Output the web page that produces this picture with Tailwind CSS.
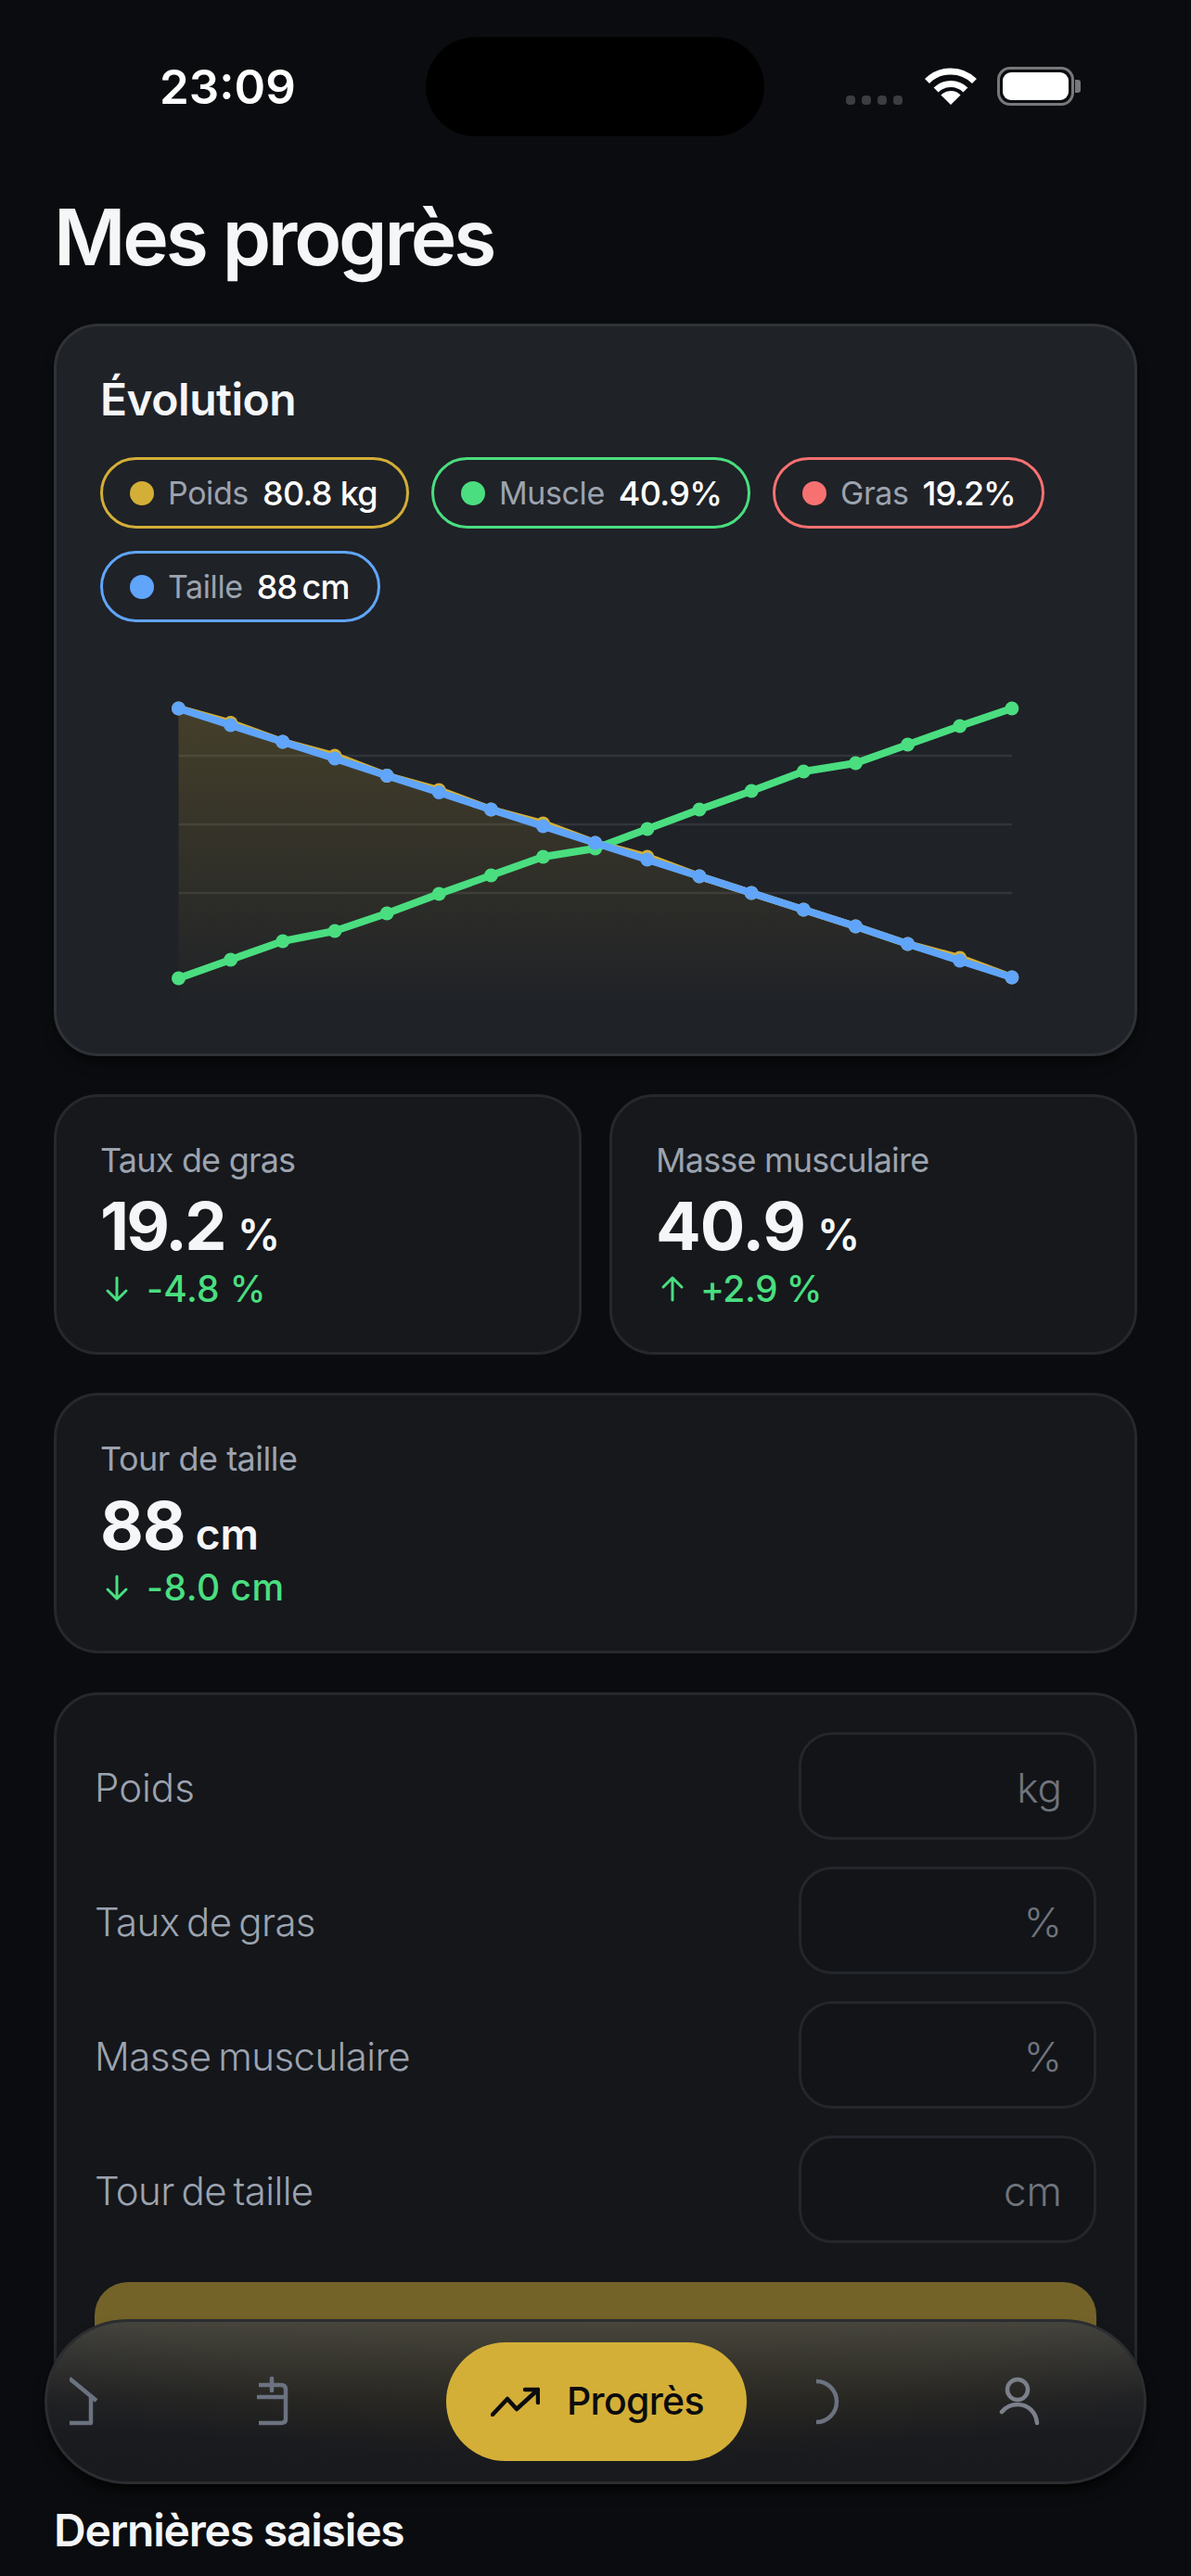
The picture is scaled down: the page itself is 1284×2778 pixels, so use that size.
<!DOCTYPE html>
<html lang="fr">
  <head>
    <meta charset="UTF-8" />
    <meta name="viewport" content="width=device-width, initial-scale=1.0" />
    <title>Mes progrès</title>
    <script src="https://cdn.jsdelivr.net/npm/@tailwindcss/browser@4"></script>
  </head>
  <body class="bg-[#0b0c0f] font-[Inter,sans-serif] text-[#f5f6f8]">
    <div class="relative w-[1284px] h-[2778px] overflow-hidden">
      <!-- status bar -->
      <div class="flex items-start pt-[40px] pl-[172px] h-[147px]">
        <div class="w-[287px] pt-[29px] text-[51px] leading-[50px] font-semibold text-white">23:09</div>
        <div class="w-[365px] h-[107px] rounded-full bg-black"></div>
        <div class="flex items-start ml-[88px] pt-[32px]">
          <div class="flex gap-[7px] mt-[31px]">
            <span class="w-[10px] h-[10px] rounded-[4px] bg-[#3c3d40]"></span>
            <span class="w-[10px] h-[10px] rounded-[4px] bg-[#3c3d40]"></span>
            <span class="w-[10px] h-[10px] rounded-[4px] bg-[#3c3d40]"></span>
            <span class="w-[10px] h-[10px] rounded-[4px] bg-[#3c3d40]"></span>
          </div>
          <svg class="ml-[24px] mt-[1px]" width="56" height="40" viewBox="0 0 56 40" fill="none" stroke="#fff" stroke-width="7">
            <path d="M2.5 14.5A36 36 0 0 1 53.5 14.5" />
            <path d="M12.1 24.1A22.5 22.5 0 0 1 43.9 24.1" />
            <path d="M28 40L17.4 29.4A15 15 0 0 1 38.6 29.4Z" fill="#fff" stroke="none" />
          </svg>
          <div class="flex items-center ml-[22px]">
            <div class="w-[83px] h-[42px] rounded-[14px] border-[3px] border-[#77787a] p-[3px]">
              <div class="w-full h-full rounded-[9px] bg-white"></div>
            </div>
            <div class="w-[6px] h-[14px] rounded-r-[3px] bg-[#77787a] ml-[1px]"></div>
          </div>
        </div>
      </div>

      <div class="px-[58px]">
        <h1 class="mt-[59px] text-[84px] leading-[100px] font-semibold tracking-[-3.2px]">Mes progrès</h1>

        <!-- chart card -->
        <section class="mt-[43px] h-[790px] rounded-[48px] border-[3px] border-[#2f3237] bg-[#1f2227] px-[47px] pt-[50px] shadow-lg shadow-black/40">
          <h2 class="text-[48px] leading-[58px] font-semibold tracking-[-0.5px]">Évolution</h2>
          <div class="flex flex-wrap gap-[24px] mt-[33px]">
            <div class="flex items-center h-[77px] w-[333px] rounded-full border-[3px] border-[#d4af37] pl-[29px]">
              <span class="w-[26px] h-[26px] rounded-full bg-[#d4af37]"></span>
              <span class="ml-[15px] text-[34px] text-[#9ca3af] tracking-[-0.4px]">Poids</span>
              <span class="ml-[15px] text-[36px] font-medium text-white tracking-[-0.7px]">80.8 kg</span>
            </div>
            <div class="flex items-center h-[77px] w-[344px] rounded-full border-[3px] border-[#4ade80] pl-[29px]">
              <span class="w-[26px] h-[26px] rounded-full bg-[#4ade80]"></span>
              <span class="ml-[15px] text-[34px] text-[#9ca3af] tracking-[-0.4px]">Muscle</span>
              <span class="ml-[15px] text-[36px] font-medium text-white tracking-[-0.7px]">40.9%</span>
            </div>
            <div class="flex items-center h-[77px] w-[293px] rounded-full border-[3px] border-[#f87171] pl-[29px]">
              <span class="w-[26px] h-[26px] rounded-full bg-[#f87171]"></span>
              <span class="ml-[15px] text-[34px] text-[#9ca3af] tracking-[-0.4px]">Gras</span>
              <span class="ml-[15px] text-[36px] font-medium text-white tracking-[-1.1px]">19.2%</span>
            </div>
            <div class="flex items-center h-[77px] w-[302px] rounded-full border-[3px] border-[#60a5fa] pl-[29px]">
              <span class="w-[26px] h-[26px] rounded-full bg-[#60a5fa]"></span>
              <span class="ml-[15px] text-[34px] text-[#9ca3af] tracking-[-0.4px]">Taille</span>
              <span class="ml-[15px] text-[36px] font-medium text-white tracking-[-1px] [word-spacing:-3px]">88 cm</span>
            </div>
          </div>
          <svg id="chart" class="block mt-[29px]" width="1067" height="400" viewBox="108 700 1067 400"></svg>
        </section>

        <!-- stats -->
        <div class="grid grid-cols-2 gap-[30px] mt-[41px]">
          <div class="h-[281px] rounded-[48px] border-[3px] border-[#26282c] bg-[#16181c] px-[47px] pt-[46px]">
            <div class="text-[36px] leading-[44px] text-[#9ca3af] tracking-[-0.8px]">Taux de gras</div>
            <div class="flex items-baseline mt-[9px] leading-[80px]">
              <span class="text-[72px] font-bold tracking-[-2.8px]">19.2</span>
              <span class="ml-[14px] text-[46px] font-semibold">%</span>
            </div>
            <div class="flex items-center mt-[-5px]">
              <svg width="36" height="36" viewBox="0 0 36 36" fill="none" stroke="#4ade80" stroke-width="3" stroke-linecap="round" stroke-linejoin="round"><path d="M18 6V30M8 20L18 30L28 20" /></svg>
              <span class="ml-[14px] text-[39px] leading-[48px] font-medium text-[#4ade80] tracking-[0.3px]">-4.8 %</span>
            </div>
          </div>
          <div class="h-[281px] rounded-[48px] border-[3px] border-[#26282c] bg-[#16181c] px-[47px] pt-[46px]">
            <div class="text-[36px] leading-[44px] text-[#9ca3af] tracking-[-0.8px]">Masse musculaire</div>
            <div class="flex items-baseline mt-[9px] leading-[80px]">
              <span class="text-[72px] font-bold tracking-[-1px]">40.9</span>
              <span class="ml-[13px] text-[46px] font-semibold">%</span>
            </div>
            <div class="flex items-center mt-[-5px]">
              <svg width="36" height="36" viewBox="0 0 36 36" fill="none" stroke="#4ade80" stroke-width="3" stroke-linecap="round" stroke-linejoin="round"><path d="M18 30V6M8 16L18 6L28 16" /></svg>
              <span class="ml-[12px] text-[39px] leading-[48px] font-medium text-[#4ade80] tracking-[-0.5px]">+2.9 %</span>
            </div>
          </div>
        </div>
        <div class="mt-[41px] h-[281px] rounded-[48px] border-[3px] border-[#26282c] bg-[#16181c] px-[47px] pt-[46px]">
          <div class="text-[36px] leading-[44px] text-[#9ca3af] tracking-[-0.5px]">Tour de taille</div>
          <div class="flex items-baseline mt-[10px] leading-[80px]">
            <span class="text-[72px] font-bold tracking-[-1px]">88</span>
            <span class="ml-[11px] text-[46px] font-semibold">cm</span>
          </div>
          <div class="flex items-center mt-[-6px]">
            <svg width="36" height="36" viewBox="0 0 36 36" fill="none" stroke="#4ade80" stroke-width="3" stroke-linecap="round" stroke-linejoin="round"><path d="M18 6V30M8 20L18 30L28 20" /></svg>
            <span class="ml-[14px] text-[39px] leading-[48px] font-medium text-[#4ade80] tracking-[0.5px]">-8.0 cm</span>
          </div>
        </div>

        <!-- form -->
        <section class="mt-[42px] h-[800px] rounded-[48px] border-[3px] border-[#26282c] bg-[#14161a] px-[41px] pt-[40px]">
          <div class="flex flex-col gap-[29px]">
            <div class="flex items-center justify-between h-[116px]">
              <span class="pt-[3px] text-[42px] font-light text-[#9ca3af]">Poids</span>
              <div class="flex items-center justify-end w-[321px] h-[116px] rounded-[36px] border-[3px] border-[#23262b] bg-[#121418] pr-[34px] pt-[3px] text-[44px] font-light text-[#70747c]">kg</div>
            </div>
            <div class="flex items-center justify-between h-[116px]">
              <span class="pt-[3px] text-[42px] font-light text-[#9ca3af] tracking-[-0.6px] [word-spacing:-3.5px]">Taux de gras</span>
              <div class="flex items-center justify-end w-[321px] h-[116px] rounded-[36px] border-[3px] border-[#23262b] bg-[#121418] pr-[34px] pt-[3px] text-[44px] font-light text-[#70747c]">%</div>
            </div>
            <div class="flex items-center justify-between h-[116px]">
              <span class="pt-[3px] text-[42px] font-light text-[#9ca3af] tracking-[-0.6px] [word-spacing:-3.5px]">Masse musculaire</span>
              <div class="flex items-center justify-end w-[321px] h-[116px] rounded-[36px] border-[3px] border-[#23262b] bg-[#121418] pr-[34px] pt-[3px] text-[44px] font-light text-[#70747c]">%</div>
            </div>
            <div class="flex items-center justify-between h-[116px]">
              <span class="pt-[3px] text-[42px] font-light text-[#9ca3af] tracking-[-0.6px] [word-spacing:-3.5px]">Tour de taille</span>
              <div class="flex items-center justify-end w-[321px] h-[116px] rounded-[36px] border-[3px] border-[#23262b] bg-[#121418] pr-[34px] pt-[3px] text-[44px] font-light text-[#70747c]">cm</div>
            </div>
          </div>
          <div class="mt-[42px] h-[130px] rounded-[36px] bg-[#d4af37]/50"></div>
        </section>

        <h2 class="mt-[75px] text-[48px] leading-[58px] font-semibold tracking-[-1.2px]">Dernières saisies</h2>
      </div>

      <!-- tab bar floats over the page -->
      <nav class="absolute left-[48px] top-[2501px] flex items-center w-[1188px] h-[178px] rounded-full border-[3px] border-[#2b2d30] bg-[radial-gradient(ellipse_760px_150px_at_50%_0%,#d4a80012_0%,#d4a8000d_60%,#d4a80000_100%),linear-gradient(180deg,#3e3f40_0%,#2d2e30_25%,#202124_48%,#1a1b1f_72%,#191a1e_100%)] shadow-lg shadow-black/60">
        <svg class="ml-[24px]" width="32" height="54" viewBox="0 0 32 54" fill="none" stroke="#6b7280" stroke-width="4.5" stroke-linejoin="round">
          <path d="M0 2L29 26M23 22V50H0" />
        </svg>
        <svg class="ml-[169px]" width="36" height="54" viewBox="0 0 36 54" fill="none" stroke="#6b7280" stroke-width="4.5" stroke-linejoin="round" stroke-linecap="round">
          <path d="M3 9H27Q32 9 32 14V46Q32 50 27 50H3" stroke-linecap="butt" />
          <path d="M1 22H32" stroke-linecap="butt" />
          <path d="M17 2V15" />
        </svg>
        <div class="flex items-center ml-[169px] w-[324px] h-[128px] rounded-full bg-[#d4af37] pl-[48px] text-[#0b0c0e]">
          <svg width="53" height="32" viewBox="0 0 53 32" fill="none" stroke="#0b0c0e" stroke-width="4.5" stroke-linecap="round" stroke-linejoin="round">
            <path d="M2 30L18 13L28 24L51 3M37 3H51V17" />
          </svg>
          <span class="ml-[29px] text-[41px] font-medium tracking-[-0.7px]">Progrès</span>
        </div>
        <svg class="ml-[73px]" width="32" height="50" viewBox="0 0 32 50" fill="none" stroke="#6b7280" stroke-width="4.5">
          <path d="M2 3A22 22 0 0 1 2 47" />
        </svg>
        <svg class="ml-[167px]" width="46" height="54" viewBox="0 0 46 54" fill="none" stroke="#7b808a" stroke-width="4.5" stroke-linecap="round">
          <circle cx="20" cy="14" r="11" />
          <path d="M3 38C8 32 14 30 20 30C31 30 40 38 41 50" />
        </svg>
      </nav>
    </div>

    <script>
      const yellow = [764, 779.5, 800, 815, 836.5, 852, 873, 888, 909, 924, 945, 963, 981, 999, 1018, 1033, 1054];
      const green = [1055, 1035, 1015, 1004, 985, 964, 944, 924, 915, 894, 873, 853, 832, 823, 803, 783, 764];
      const blue = [764, 782, 800, 818, 836.5, 854.5, 873, 891, 909, 927, 945, 963, 981, 999, 1018, 1036, 1054];
      const xAt = (i) => 192.5 + i * 56.15;

      function series(values, color) {
        const pts = values.map((y, i) => xAt(i) + "," + y).join(" ");
        let out = '<polyline points="' + pts + '" fill="none" stroke="' + color + '" stroke-width="8" stroke-linejoin="round" />';
        values.forEach((y, i) => {
          out += '<circle cx="' + xAt(i) + '" cy="' + y + '" r="7.5" fill="' + color + '" />';
        });
        return out;
      }

      const yellowPts = yellow.map((y, i) => xAt(i) + "," + y).join(" ");
      let svg =
        '<defs><linearGradient id="area" gradientUnits="userSpaceOnUse" x1="0" y1="764" x2="0" y2="1085">' +
        '<stop offset="0" stop-color="#d4af37" stop-opacity="0.21" /><stop offset="1" stop-color="#d4af37" stop-opacity="0" />' +
        "</linearGradient></defs>";
      [815, 889, 963].forEach((y) => {
        svg += '<line x1="192.5" x2="1091" y1="' + y + '" y2="' + y + '" stroke="#31343a" stroke-width="2.5" />';
      });
      svg += '<polygon points="192.5,1085 ' + yellowPts + ' 1091,1085" fill="url(#area)" />';
      svg += series(yellow, "#d4af37") + series(green, "#4ade80") + series(blue, "#60a5fa");
      document.getElementById("chart").innerHTML = svg;
    </script>
  </body>
</html>
